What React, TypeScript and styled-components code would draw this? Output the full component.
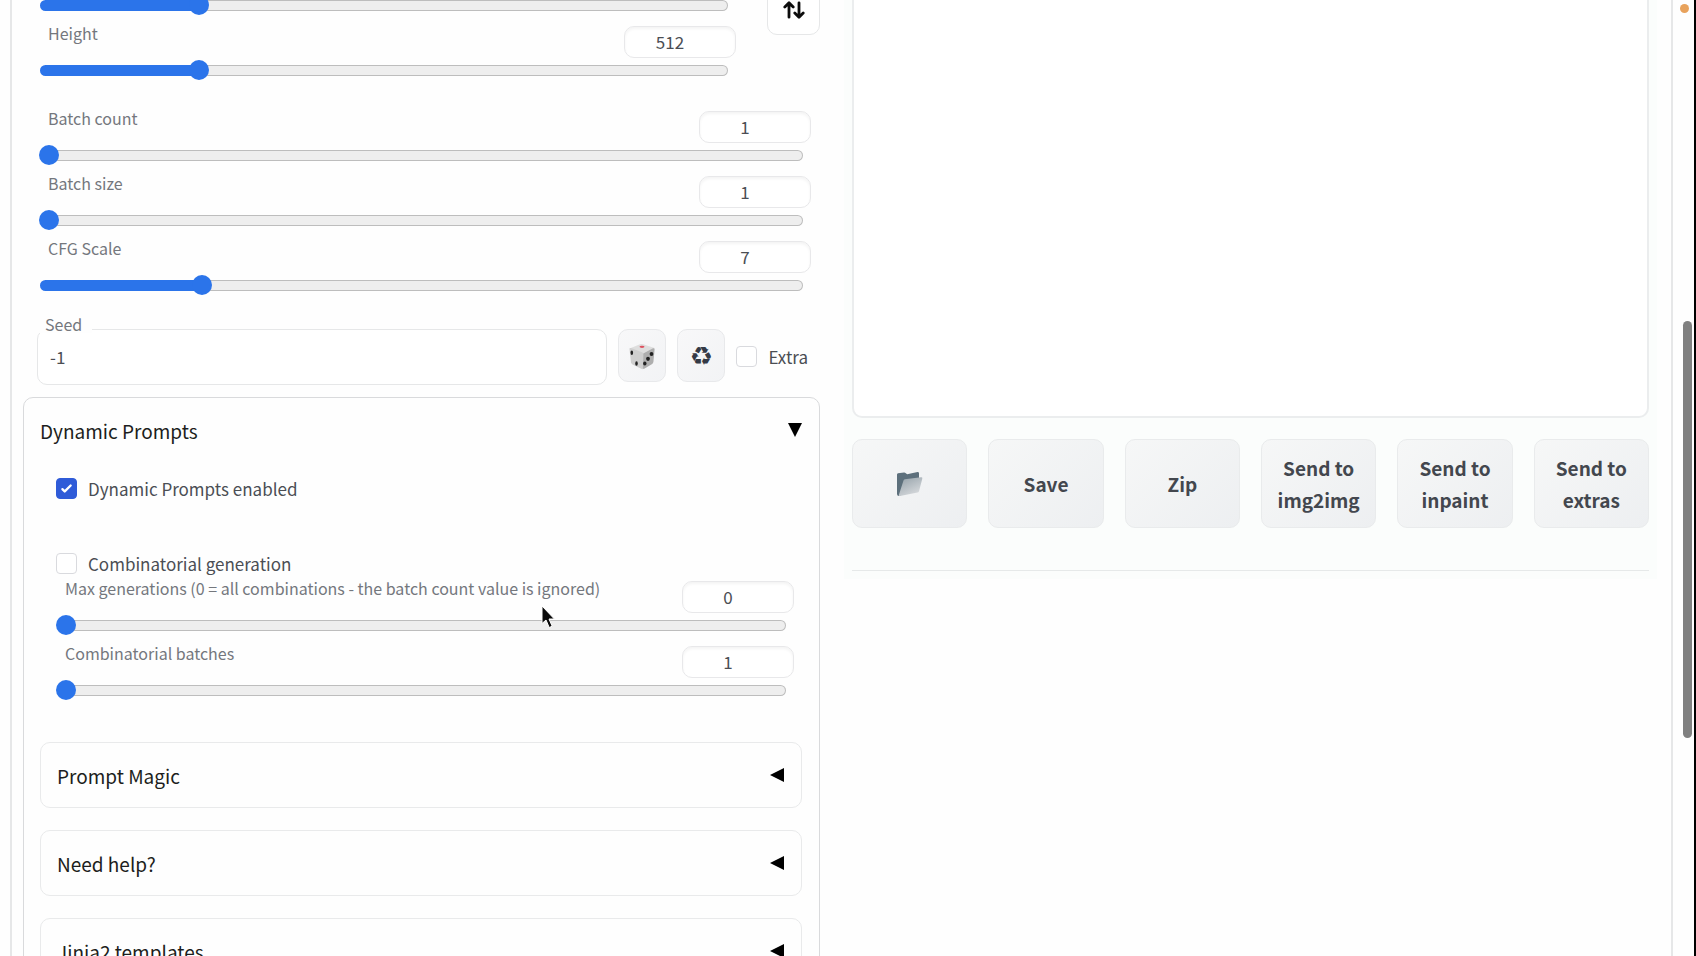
import React, { useId, useState } from "react";
import styled, { createGlobalStyle } from "styled-components";

const GlobalStyle = createGlobalStyle`
  *, *::before, *::after { box-sizing: border-box; }
  body {
    margin: 0;
    overflow: hidden;
    background: #fefefe;
    color: #4b4e54;
    font-family: "Noto Sans CJK SC", "Noto Sans", sans-serif;
    font-size: 17px;
  }
  button, input { font: inherit; color: inherit; margin: 0; }
`;

const Page = styled.div`
  display: flex;
  height: 100vh;
  overflow: hidden;
  padding-left: 10px;
  border-right: 2px solid #000;
`;

const Shell = styled.main`
  flex: 1;
  display: grid;
  grid-template-columns: 1fr 1fr;
  gap: 32px;
  align-items: start;
  padding: 0 22px 0 11px;
  border: 2px solid #e6e7e8;
  border-width: 0 2px;
`;

const ScrollGutter = styled.aside`
  width: 21px;
  display: flex;
  flex-direction: column;
  align-items: flex-end;
  padding: 4px 2px 0 0;
`;

const RecordDot = styled.span`
  width: 9px;
  height: 9px;
  margin-right: 3px;
  border-radius: 50%;
  background: #e8a25c;
`;

const ScrollThumb = styled.span`
  width: 9px;
  height: 417px;
  margin-top: 308px;
  border-radius: 5px;
  background: #808080;
`;

const Column = styled.section`
  min-width: 0;
`;

const SizeRow = styled.div`
  display: flex;
  align-items: flex-start;
  gap: 31px;
  padding-left: 17px;
`;

const SliderStack = styled.div`
  flex: 1;
  display: grid;
  gap: 11px;
`;

const SizeStack = styled(SliderStack)`
  margin-top: -5px;
`;

const BatchStack = styled(SliderStack)`
  padding: 31px 9px 0 17px;
`;

const SliderBlock = styled.div`
  display: grid;
  gap: 2px;
`;

const SliderHead = styled.div`
  display: flex;
  justify-content: space-between;
  align-items: flex-start;
  height: 32px;
  padding-left: 8px;
`;

const SliderLabel = styled.label`
  font-size: 16px;
  line-height: 14px;
  white-space: nowrap;
  color: #74777d;
`;

const NumberBox = styled.input`
  width: 112px;
  height: 32px;
  padding: 0 20px 2px 0;
  border: 1px solid #e8e8ea;
  border-radius: 10px;
  outline: 0;
  background: #fff;
  box-shadow: inset 0 2px 3px #f4f4f4;
  text-align: center;
  appearance: textfield;
  &::-webkit-inner-spin-button { appearance: none; margin: 0; }
`;

const Range = styled.input<{ $fill: number }>`
  display: block;
  appearance: none;
  width: calc(100% - 8px);
  height: 20px;
  background: none;
  outline: 0;

  &::-webkit-slider-runnable-track {
    height: 11px;
    border: 1px solid transparent;
    border-radius: 6px;
    background:
      linear-gradient(#2b74ea, #2b74ea) 0 0 / calc(10px + (100% - 20px) * ${(p) => p.$fill}) 100% no-repeat border-box,
      linear-gradient(#eeeeee, #eeeeee) padding-box,
      linear-gradient(#bdbdbd, #bdbdbd) border-box;
  }
  &::-webkit-slider-thumb {
    appearance: none;
    width: 20px;
    height: 20px;
    margin: -6px 0 0 -2px;
    border-radius: 50%;
    background: #2b74ea;
  }
`;

const SwapButton = styled.button`
  display: flex;
  align-items: center;
  justify-content: center;
  width: 53px;
  height: 50px;
  margin-top: -15px;
  padding: 0;
  border: 1px solid #e6e7e8;
  border-radius: 10px;
  background: #fff;
`;

const SeedRow = styled.div`
  display: flex;
  align-items: flex-start;
  gap: 11px;
  padding: 34px 12px 0 14px;
`;

const SeedField = styled.div`
  position: relative;
  flex: 1;
`;

const SeedLabel = styled.label`
  position: absolute;
  left: -1px;
  top: -14px;
  padding: 0 10px 0 9px;
  font-size: 16px;
  line-height: 18px;
  background: #fefefe;
  color: #74777d;
`;

const SeedInput = styled.input`
  display: block;
  width: 100%;
  height: 56px;
  padding: 0 12px 2px;
  border: 1px solid #e6e7e8;
  border-radius: 10px;
  outline: 0;
  background: #fff;
`;

const ToolButton = styled.button`
  display: flex;
  align-items: center;
  justify-content: center;
  width: 48px;
  height: 53px;
  padding: 0;
  border: 1px solid #e8e9eb;
  border-radius: 10px;
  background: linear-gradient(135deg, #f8f8f9, #f2f3f5);
  color: #343a46;
`;

const RecycleGlyph = styled.span`
  font-family: "DejaVu Sans", sans-serif;
  font-size: 26px;
  line-height: 28px;
`;

const Check = styled.label`
  display: flex;
  align-items: center;
  gap: 11px;
  height: 22px;
  white-space: nowrap;
`;

const SeedCheck = styled(Check)`
  margin-top: 16px;
`;

const CheckBox = styled.input`
  appearance: none;
  flex: none;
  width: 21px;
  height: 21px;
  border: 1px solid #d9dade;
  border-radius: 4px;
  background: #fff;
  &:checked {
    border-color: #2f5bd8;
    background: #2f5bd8 url("data:image/svg+xml,%3Csvg viewBox='0 0 16 16' fill='white' xmlns='http://www.w3.org/2000/svg'%3E%3Cpath d='M12.2 4.8a1 1 0 0 1 0 1.4l-5 5a1 1 0 0 1-1.4 0l-2-2a1 1 0 0 1 1.4-1.4L6.5 9.1l4.3-4.3a1 1 0 0 1 1.4 0z'/%3E%3C/svg%3E") center / 100% no-repeat;
  }
`;

const Panel = styled.section`
  position: relative;
  margin-top: 12px;
  padding: 0 17px 17px 16px;
  border: 1px solid #d9dadc;
  border-radius: 10px;
`;

const PanelToggle = styled.button`
  display: flex;
  align-items: center;
  justify-content: space-between;
  width: 100%;
  height: 64px;
  padding: 0;
  border: 0;
  background: none;
  color: #1d1e20;
  font-size: 19px;
`;

const PanelBody = styled.div`
  display: grid;
  padding: 15px 8px 0 16px;
`;

const CombinatorialCheck = styled(Check)`
  margin-top: 53px;
`;

const PromptStack = styled(SliderStack)`
  margin-top: 7px;
  padding-left: 1px;
`;

const AccordionList = styled.div`
  display: grid;
  gap: 22px;
  margin-top: 42px;
`;

const AccordionItem = styled(PanelToggle)`
  height: 66px;
  padding: 0 17px 0 16px;
  border: 1px solid #e9eaeb;
  border-radius: 10px;
`;

const Pointer = styled.svg`
  position: absolute;
  left: 517px;
  top: 207px;
`;

const OutputColumn = styled(Column)`
  margin: 0 -8px;
  padding: 0 8px 8px;
  background: #fbfdfc;
`;

const Gallery = styled.div`
  height: 418px;
  border: 2px solid #ebedee;
  border-top: 0;
  border-radius: 0 0 10px 10px;
  background: #fff;
`;

const ActionRow = styled.div`
  display: grid;
  grid-template-columns: repeat(6, 1fr);
  gap: 21px;
  padding: 21px 0 42px;
  border-bottom: 1px solid #e6e9e9;
`;

const ActionButton = styled.button`
  display: flex;
  align-items: center;
  justify-content: center;
  height: 89px;
  padding: 0 14px;
  border: 1px solid #e9ebec;
  border-radius: 10px;
  background: linear-gradient(135deg, #f6f7f7, #edeff1);
  color: #43474e;
  font-size: 19px;
  font-weight: 600;
  line-height: 32px;
`;

type SliderProps = {
  label: string;
  min: number;
  max: number;
  initial: number;
  compact?: boolean;
};

function Slider({ label, min, max, initial, compact }: SliderProps) {
  const [value, setValue] = useState(initial);
  const id = useId();
  const change = (e: React.ChangeEvent<HTMLInputElement>) => setValue(Number(e.target.value));
  const range = (
    <Range
      type="range"
      aria-label={label}
      min={min}
      max={max}
      value={value}
      onChange={change}
      $fill={(value - min) / (max - min)}
    />
  );
  if (compact) return range;
  return (
    <SliderBlock>
      <SliderHead>
        <SliderLabel htmlFor={id}>{label}</SliderLabel>
        <NumberBox id={id} type="number" min={min} max={max} value={value} onChange={change} />
      </SliderHead>
      {range}
    </SliderBlock>
  );
}

const SwapIcon = () => (
  <svg width="22" height="18" viewBox="0 0 22 18" fill="none" stroke="#0c0c0c" strokeWidth="2.8" strokeLinecap="round" strokeLinejoin="round" aria-hidden="true">
    <path d="M6 16.2V2M1.8 6 6 1.8l4.2 4.2M16 1.8V16M11.8 12l4.2 4.2 4.2-4.2" />
  </svg>
);

const DiceIcon = () => (
  <svg width="28" height="28" viewBox="0 0 28 28" aria-hidden="true">
    <path d="M1.5 6.500 12 2.200q1.500-.5 3 0L26.500 6l-11 7z" fill="#dedede" />
    <path d="M1.500 7q0-1.500 1.500-1l11.500 4.500q1 .5 1 1.500L15 26.500q-.2 1-1.200.6L4.500 22.500q-1.300-.8-1.500-2z" fill="#cfcfcf" />
    <path d="M15.300 11.500 25 6.300q1.800-.5 1.600 1L25.400 20q-.2 1.200-1.200 1.900l-8 4.900q-1.400.6-1.300-1z" fill="#aeaeae" />
    <ellipse cx="14" cy="4.800" rx="2.500" ry="1.100" fill="#dd5260" />
    <g fill="#222">
      <ellipse cx="3.800" cy="10.700" rx="1.300" ry="2.200" />
      <ellipse cx="8.500" cy="21.500" rx="1.300" ry="2.200" />
      <ellipse cx="23.500" cy="12" rx="1.900" ry="2.100" />
      <ellipse cx="20" cy="16.800" rx="1.900" ry="2.100" />
      <ellipse cx="16.800" cy="21.500" rx="1.700" ry="2.100" />
    </g>
  </svg>
);

const FolderIcon = () => (
  <svg width="27" height="26" viewBox="0 0 27 26" aria-hidden="true">
    <defs>
      <linearGradient id="folderFront" x1="0" y1="0" x2="0.6" y2="1">
        <stop offset="0" stopColor="#93a0a8" />
        <stop offset="1" stopColor="#d6d9dc" />
      </linearGradient>
    </defs>
    <path d="M1 3.500q0-1 1-1.200l6-.7q1-.1 1.800.6l1.400 1L21.500 1q1.500-.1 1.500 1.200V16L3 25q-2 0-2-2z" fill="#5d707c" />
    <path d="M7.500 9.500q.3-1 1.300-1.200L25 6.300q1.700-.1 1.300 1.400L23 20.200q-.4 1.200-1.500 1.400L4 25q-1.500.2-1.100-1.200z" fill="url(#folderFront)" />
  </svg>
);

const Triangle = ({ open = false }: { open?: boolean }) => (
  <svg width="14" height="14" viewBox="0 0 14 14" aria-hidden="true">
    <path d={open ? "M0 0H14L7 14Z" : "M14 0V14L0 7Z"} fill="#000" />
  </svg>
);

const sections = ["Prompt Magic", "Need help?", "Jinja2 templates"];
const actions = ["Save", "Zip", "Send to img2img", "Send to inpaint", "Send to extras"];

export default function App() {
  const [seed, setSeed] = useState("-1");
  return (
    <>
      <GlobalStyle />
      <Page>
        <Shell>
          <Column>
            <SizeRow>
              <SizeStack>
                <Slider label="Width" min={64} max={2048} initial={512} compact />
                <Slider label="Height" min={64} max={2048} initial={512} />
              </SizeStack>
              <SwapButton type="button" aria-label="Switch width and height">
                <SwapIcon />
              </SwapButton>
            </SizeRow>
            <BatchStack>
              <Slider label="Batch count" min={1} max={100} initial={1} />
              <Slider label="Batch size" min={1} max={8} initial={1} />
              <Slider label="CFG Scale" min={1} max={30} initial={7} />
            </BatchStack>
            <SeedRow>
              <SeedField>
                <SeedLabel htmlFor="seed">Seed</SeedLabel>
                <SeedInput id="seed" value={seed} onChange={(e) => setSeed(e.target.value)} />
              </SeedField>
              <ToolButton type="button" aria-label="Random seed" onClick={() => setSeed("-1")}>
                <DiceIcon />
              </ToolButton>
              <ToolButton type="button" aria-label="Reuse seed">
                <RecycleGlyph>♻</RecycleGlyph>
              </ToolButton>
              <SeedCheck>
                <CheckBox type="checkbox" />
                Extra
              </SeedCheck>
            </SeedRow>
            <Panel>
              <PanelToggle type="button" aria-expanded="true">
                Dynamic Prompts
                <Triangle open />
              </PanelToggle>
              <PanelBody>
                <Check>
                  <CheckBox type="checkbox" defaultChecked />
                  Dynamic Prompts enabled
                </Check>
                <CombinatorialCheck>
                  <CheckBox type="checkbox" />
                  Combinatorial generation
                </CombinatorialCheck>
                <PromptStack>
                  <Slider
                    label="Max generations (0 = all combinations - the batch count value is ignored)"
                    min={0}
                    max={1000}
                    initial={0}
                  />
                  <Slider label="Combinatorial batches" min={1} max={10} initial={1} />
                </PromptStack>
              </PanelBody>
              <AccordionList>
                {sections.map((title) => (
                  <AccordionItem key={title} type="button" aria-expanded="false">
                    {title}
                    <Triangle />
                  </AccordionItem>
                ))}
              </AccordionList>
              <Pointer width="14" height="24" viewBox="0 0 14 24" aria-hidden="true">
                <path d="M1 1V18.500L5 15l3.200 7.500 3-1.300L8 14h5.400z" fill="#0a0a0a" stroke="#fff" strokeWidth="1" />
              </Pointer>
            </Panel>
          </Column>
          <OutputColumn>
            <Gallery />
            <ActionRow>
              <ActionButton type="button" aria-label="Open folder">
                <FolderIcon />
              </ActionButton>
              {actions.map((name) => (
                <ActionButton key={name} type="button">
                  {name}
                </ActionButton>
              ))}
            </ActionRow>
          </OutputColumn>
        </Shell>
        <ScrollGutter aria-hidden="true">
          <RecordDot />
          <ScrollThumb />
        </ScrollGutter>
      </Page>
    </>
  );
}
